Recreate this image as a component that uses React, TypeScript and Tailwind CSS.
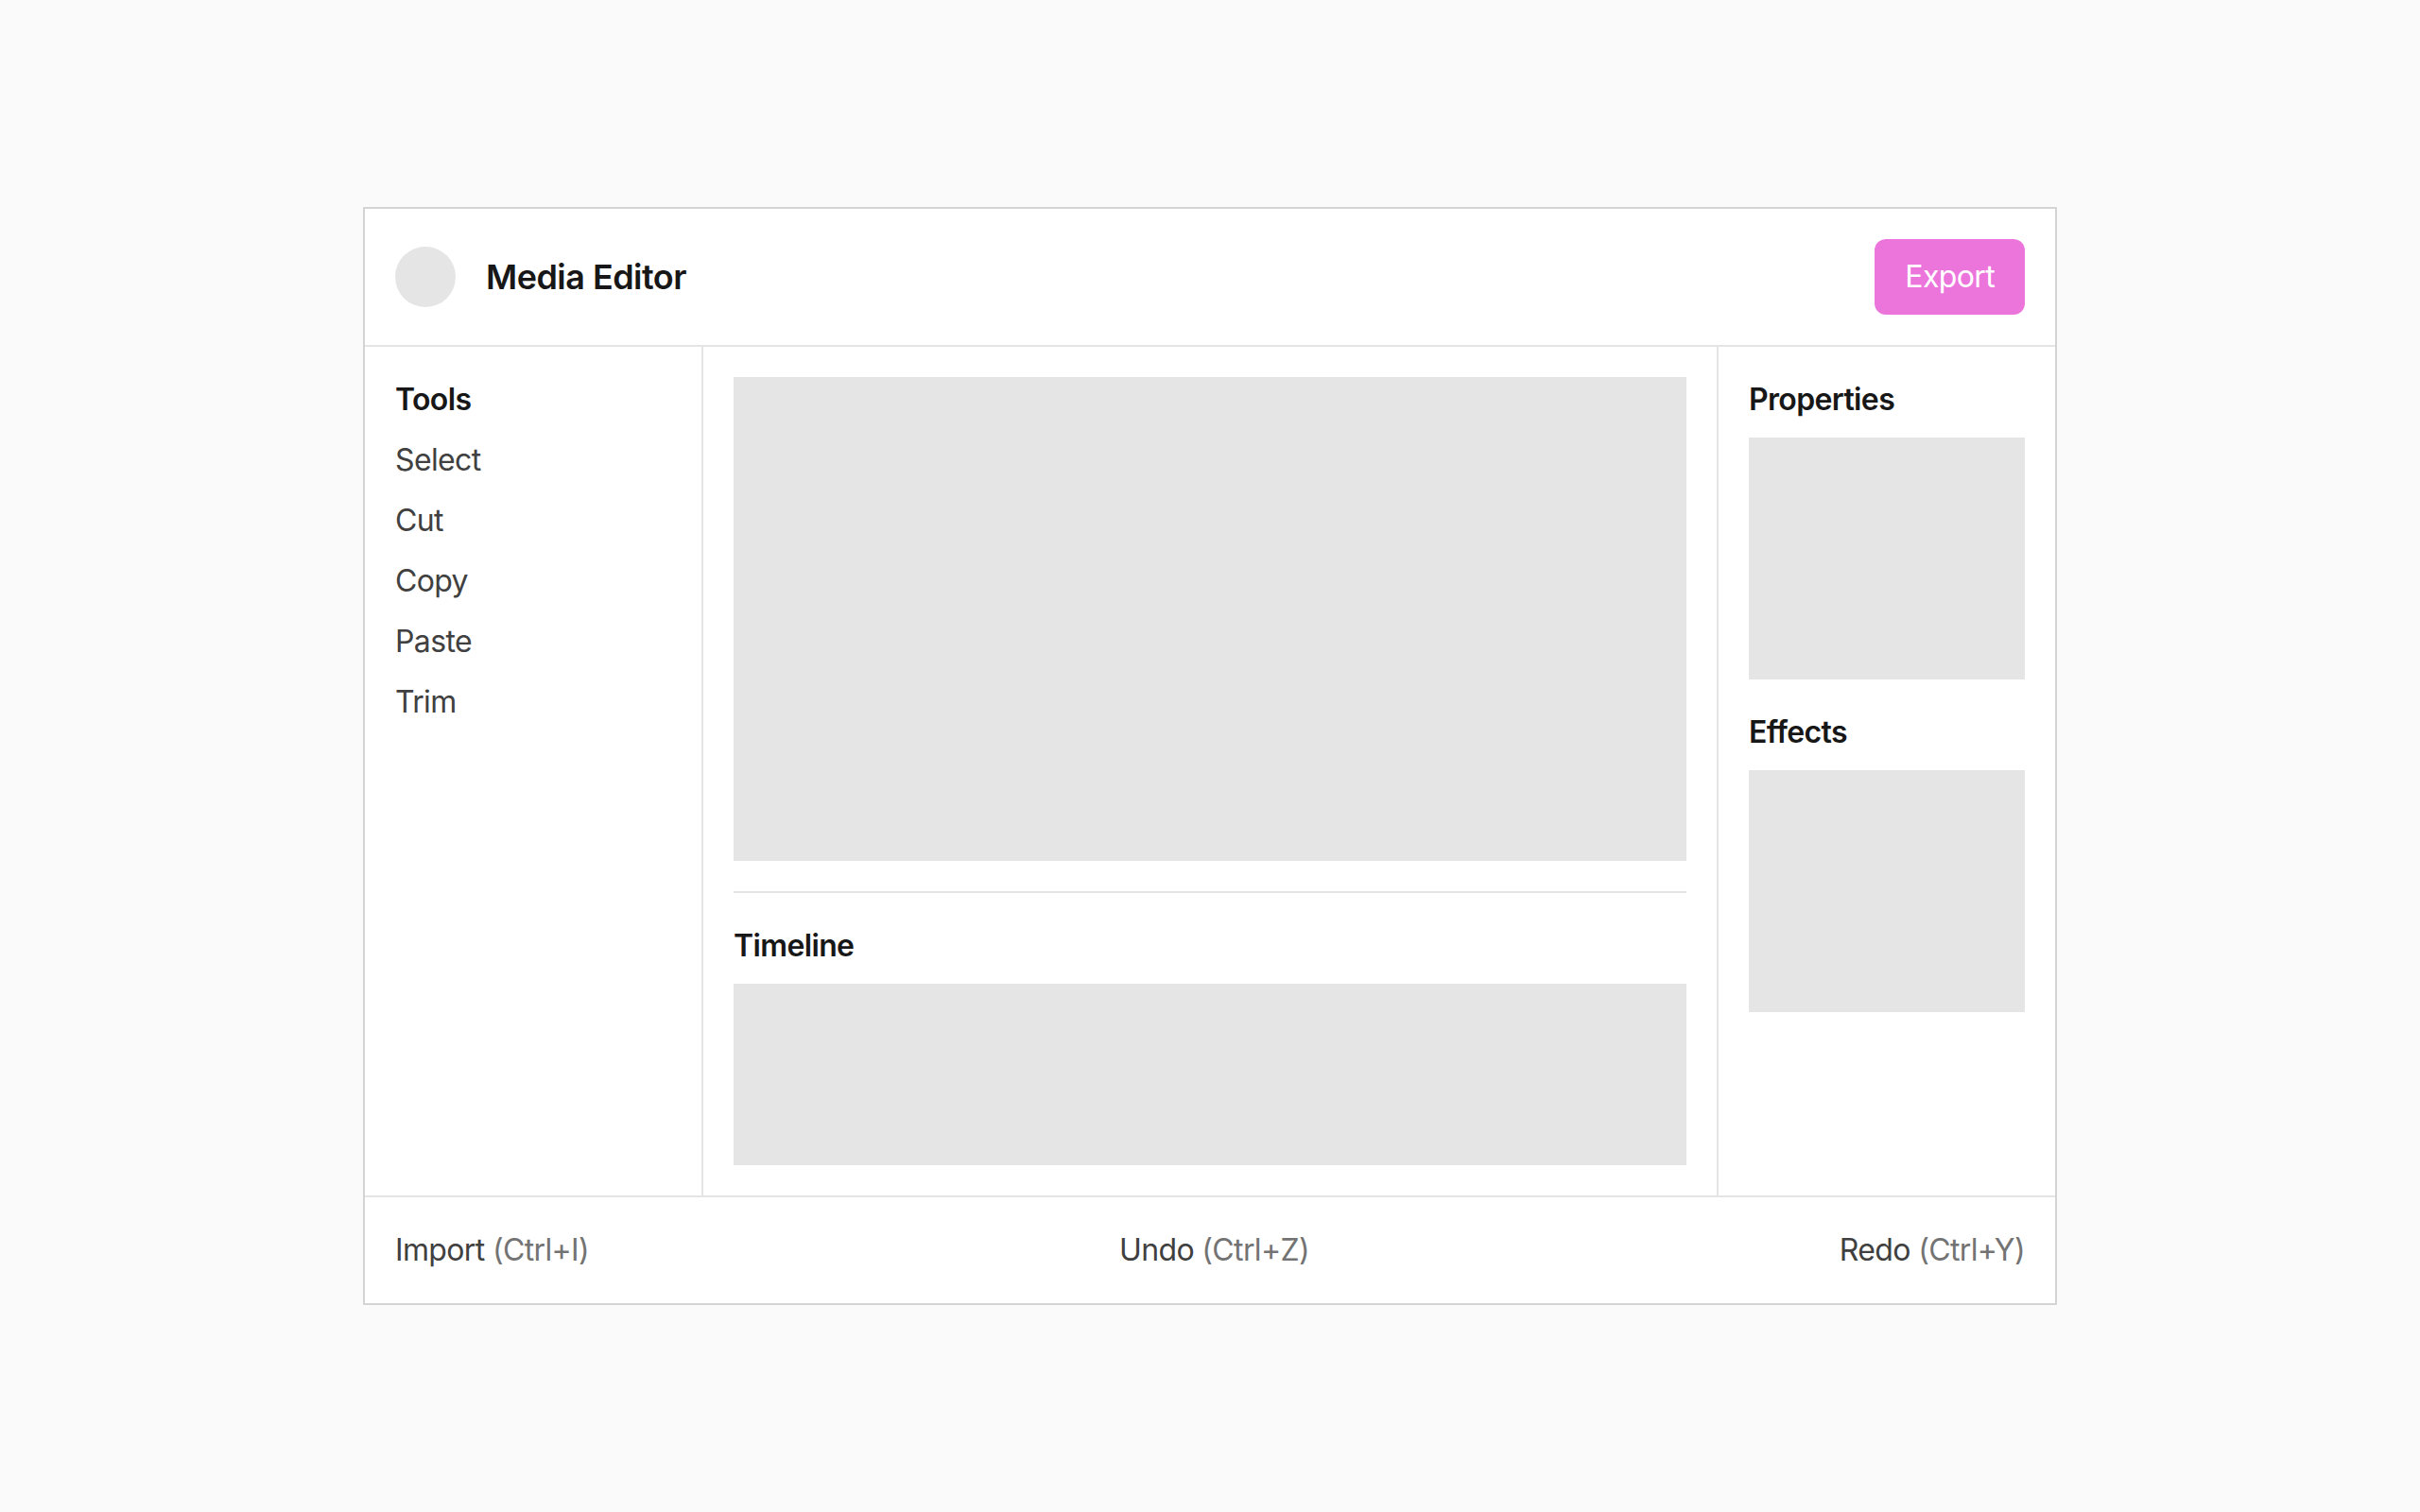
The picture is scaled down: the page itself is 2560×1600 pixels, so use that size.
const font = { fontFamily: "Inter, 'Noto Sans', sans-serif" };

const tools = ["Select", "Cut", "Copy", "Paste", "Trim"];

const shortcuts = [
  { label: "Import", keys: "(Ctrl+I)" },
  { label: "Undo", keys: "(Ctrl+Z)" },
  { label: "Redo", keys: "(Ctrl+Y)" },
];

export default function App() {
  return (
    <div
      className="min-h-screen w-full bg-[#fafafa] flex items-center justify-center"
      style={font}
    >
      <div className="w-[1792px] bg-white border-2 border-[#d4d4d4] flex flex-col">
        {/* Header */}
        <header className="flex items-center justify-between p-8 border-b-2 border-[#e5e5e5]">
          <div className="flex items-center gap-8">
            <div className="w-16 h-16 rounded-full bg-[#e5e5e5]" />
            <h1 className="text-[36px] leading-[56px] font-semibold tracking-[-0.015em] text-[#171717]">
              Media Editor
            </h1>
          </div>
          <button className="h-20 px-8 rounded-xl bg-[#ec75dc] text-white text-[32px] leading-[48px] tracking-[-0.02em]">
            Export
          </button>
        </header>

        {/* Body */}
        <div className="flex text-[32px] leading-[48px] tracking-[-0.02em]">
          <aside className="w-[358px] shrink-0 border-r-2 border-[#e5e5e5] p-8">
            <h2 className="font-semibold text-[#171717]">Tools</h2>
            <ul className="mt-4 flex flex-col gap-4">
              {tools.map((t) => (
                <li key={t} className="text-[#404040]">
                  {t}
                </li>
              ))}
            </ul>
          </aside>

          <main className="flex-1 p-8 flex flex-col">
            <div className="h-[512px] bg-[#e5e5e5]" />
            <div className="mt-8 pt-8 border-t-2 border-[#e5e5e5] flex flex-col gap-4">
              <h2 className="font-semibold text-[#171717]">Timeline</h2>
              <div className="h-[192px] bg-[#e5e5e5]" />
            </div>
          </main>

          <aside className="w-[358px] shrink-0 border-l-2 border-[#e5e5e5] p-8 flex flex-col gap-8">
            <section className="flex flex-col gap-4">
              <h2 className="font-semibold text-[#171717]">Properties</h2>
              <div className="h-[256px] bg-[#e5e5e5]" />
            </section>
            <section className="flex flex-col gap-4">
              <h2 className="font-semibold text-[#171717]">Effects</h2>
              <div className="h-[256px] bg-[#e5e5e5]" />
            </section>
          </aside>
        </div>

        {/* Footer */}
        <footer className="flex items-center justify-between p-8 border-t-2 border-[#e5e5e5]">
          {shortcuts.map((s) => (
            <span
              key={s.label}
              className="text-[32px] leading-[48px] tracking-[-0.02em] text-[#404040]"
            >
              {s.label} <span className="text-[#737373]">{s.keys}</span>
            </span>
          ))}
        </footer>
      </div>
    </div>
  );
}
